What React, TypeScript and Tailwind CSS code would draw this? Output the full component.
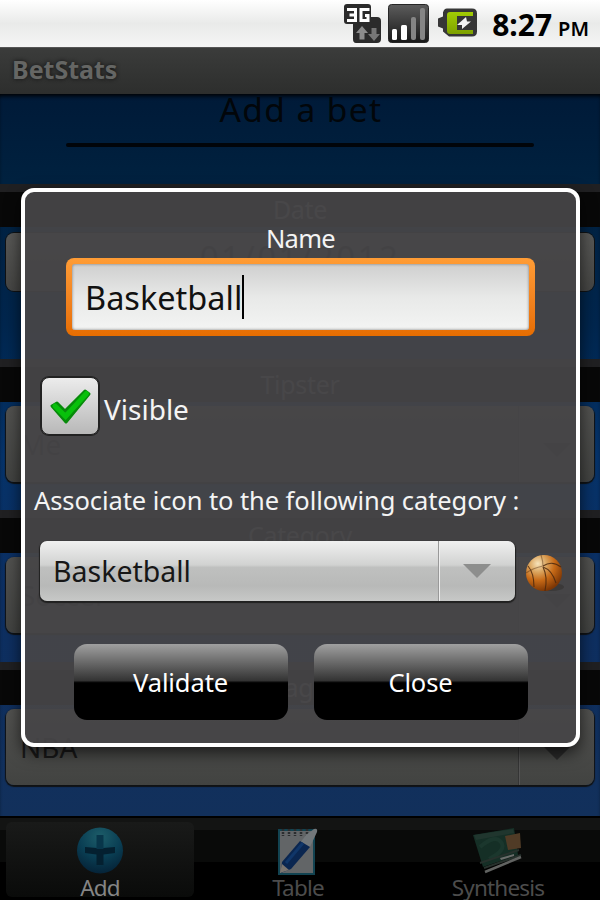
import type { ReactNode } from "react";
import clsx from "clsx";

function StatusIcons() {
  return (
    <svg width="136" height="47" viewBox="0 0 136 47" className="shrink-0">
      <defs>
        <linearGradient id="tile" x1="0" y1="0" x2="0" y2="1">
          <stop offset="0" stopColor="#5c5c5c" />
          <stop offset="1" stopColor="#181818" />
        </linearGradient>
        <linearGradient id="cell" x1="0" y1="0" x2="0" y2="1">
          <stop offset="0" stopColor="#a2cc04" />
          <stop offset="1" stopColor="#7da000" />
        </linearGradient>
      </defs>

      {/* 3G */}
      <path
        d="M4 4H25Q28 4 28 7V17H34Q38 17 38 21V39Q38 43 34 43H13Q10 43 10 39V24H4Q1 24 1 21V7Q1 4 4 4Z"
        fill="#2b2b2b"
      />
      <path d="M4 9.500H12.500V20.500H4M6.500 15H12.500" fill="none" stroke="#fff" strokeWidth="3" />
      <path d="M26.500 9.500H18V20.500H25V15.500H22" fill="none" stroke="#fff" strokeWidth="3" />
      <path d="M19 26L25 33H21.500V39.500H16.500V33H13Z" fill="#8c8c8c" />
      <path d="M31 41L25 34H28.500V28H33.500V34H37Z" fill="#777" />

      {/* signal */}
      <rect x="45.500" y="4.500" width="40" height="38" rx="3" fill="url(#tile)" stroke="#262626" />
      <rect x="49" y="29" width="5" height="11" rx="1.500" fill="#fff" />
      <rect x="58" y="25" width="6" height="15" rx="1.500" fill="#fff" />
      <rect x="68" y="17" width="5" height="23" rx="2" fill="#858585" />
      <rect x="77" y="8" width="5" height="32" rx="2" fill="#858585" />

      {/* battery */}
      <path
        d="M104 8H129Q134 8 134 13V31Q134 36 129 36H106L100 31V28L95 26V18L100 16V12Q101 8 104 8Z"
        transform="translate(0 .5)"
        fill="#363636"
      />
      <path d="M107 12H130V16H114V30H130V34H107Q104 34 104 31V15Q104 12 107 12Z" fill="url(#cell)" />
      <path d="M114 25L123 17L124 21.500H128L119 29L119 25Z" fill="#f4f4f4" />
    </svg>
  );
}

function Basketball() {
  return (
    <svg width="42" height="42" viewBox="0 0 42 42" className="shrink-0">
      <defs>
        <radialGradient id="ball" cx=".33" cy=".24" r=".78">
          <stop offset="0" stopColor="#f6e3bb" />
          <stop offset=".3" stopColor="#dba660" />
          <stop offset=".6" stopColor="#c76a17" />
          <stop offset="1" stopColor="#7d3604" />
        </radialGradient>
      </defs>
      <ellipse cx="28" cy="34" rx="13" ry="4" fill="#302d2b" opacity=".5" />
      <circle cx="21" cy="20" r="18" fill="url(#ball)" />
      <g fill="none" stroke="#4b280e" strokeWidth="1.100" opacity=".85">
        <path d="M5 13Q11 20 11 34" />
        <path d="M20 14Q25 24 22 38" />
        <path d="M20 13Q29 7 38 14" />
        <path d="M20 14Q29 17 33 30" />
        <path d="M3 20Q10 15 20 13Q20 8 18 2" opacity=".5" />
      </g>
    </svg>
  );
}

function AddIcon() {
  return (
    <svg width="48" height="50" viewBox="0 0 48 50">
      <defs>
        <radialGradient id="add" cx=".5" cy=".2" r=".8">
          <stop offset="0" stopColor="#1d5d69" />
          <stop offset=".55" stopColor="#0a3f54" />
          <stop offset="1" stopColor="#052338" />
        </radialGradient>
      </defs>
      <circle cx="24" cy="24.500" r="23" fill="url(#add)" />
      <path d="M20.500 22H27.500L39 21V27L27.500 28.500V39H20.500V28.500L9 27V21Z" fill="#042030" />
      <path d="M20.500 9H27.500V23H20.500Z" fill="#08364a" />
    </svg>
  );
}

function TableIcon() {
  return (
    <svg width="48" height="50" viewBox="0 0 48 50">
      <path d="M5 4H40V48H5Z" fill="#626567" stroke="#124351" strokeWidth="2" />
      <path d="M9 3V10M15 3V10M21 3V10M27 3V10M33 3V10" stroke="#2b2d2f" strokeWidth="2.500" strokeDasharray="2 1" />
      <path d="M32 9L40 3Q44 2 43 6L36 21L26 17Z" fill="#72777a" />
      <path d="M26 15L36 21L17 43L7 47L8 36Z" fill="#0a2650" />
      <path d="M29 17L12 37" stroke="#103669" strokeWidth="3" />
      <path d="M8 38L15 44L6 47Z" fill="#7b756f" />
    </svg>
  );
}

function SynthesisIcon() {
  return (
    <svg width="54" height="50" viewBox="0 0 54 50">
      <path d="M2 9L43 2L47 29L12 41Z" fill="#152f26" />
      <path d="M3 9L42 3L43 7L5 14Z" fill="#20362e" />
      <path d="M9 21Q24 8 30 16T18 33" fill="none" stroke="#1b372d" strokeWidth="4" />
      <path d="M34 10L49 7L50 22L37 24Z" fill="#503b26" />
      <path d="M9 37L48 24M13 42L50 29" stroke="#26312c" strokeWidth="2" />
      <path d="M14 46L50 31" stroke="#616361" strokeWidth="2.500" />
      <path d="M29 32L43 28V30L30 34Z" fill="#6b6d6b" />
    </svg>
  );
}

function SectionBar({ children }: { children: ReactNode }) {
  return (
    <div className="h-[43px] shrink-0 bg-[linear-gradient(#202022_0_8px,#080808_8px)] text-center">
      <span className="block pt-2 text-[25px] leading-[34px] tracking-[-0.3px] text-[#666]">{children}</span>
    </div>
  );
}

function DimSpinner({ children }: { children: ReactNode }) {
  return (
    <div className="mx-1.5 mt-1 flex h-[76px] shrink-0 rounded-lg bg-linear-to-b from-[#525250] to-[#424341] shadow-[0_1px_1px_1px_#101214]">
      <div className="flex flex-1 items-center pl-3.5 text-[28px] text-[#191919]">{children}</div>
      <div className="flex w-[76px] items-center justify-center border-l border-[#353535] shadow-[inset_1px_0_#555]">
        <svg width="28" height="14" viewBox="0 0 28 14" className="mt-3">
          <path d="M0 0H28L14 14Z" fill="#2b2b2b" />
        </svg>
      </div>
    </div>
  );
}

const tabs = [
  { label: "Add", icon: <AddIcon />, active: true },
  { label: "Table", icon: <TableIcon />, active: false },
  { label: "Synthesis", icon: <SynthesisIcon />, active: false },
];

function DialogButton({ children }: { children: ReactNode }) {
  return (
    <button
      type="button"
      className="h-[76px] w-[214px] rounded-[13px] bg-[linear-gradient(#a0a0a0_0,#343434_48%,#000_51%)] text-[25.500px] tracking-[-0.1px] text-white"
    >
      {children}
    </button>
  );
}

function EditDialog() {
  return (
    <div
      role="dialog"
      className="absolute top-[188px] left-[21px] flex h-[559px] w-[559px] flex-col rounded-[13px] border-4 border-white bg-[#464547]/94 text-[#f4f4f4] shadow-[0_6px_16px_rgba(0,0,0,0.65)]"
    >
      <label className="mt-7 block h-9 text-center text-[25.500px] leading-9 tracking-[-0.7px]">Name</label>
      <div className="mx-[41px] mt-0.5 h-[78px] shrink-0 rounded-lg bg-linear-to-b from-[#ff9c35] to-[#e66d00] p-1.5">
        <div className="flex h-full items-center rounded-[3px] bg-linear-to-b from-[#cfcfcf] via-[#e8e9e8] to-[#f3f4f3] pl-[13px] text-[#111] shadow-[inset_0_0_3px_#777]">
          <span className="pt-0.5 text-[32.500px] leading-10">Basketball</span>
          <span className="h-11 w-0.5 bg-black" />
        </div>
      </div>

      <div className="mt-[41px] ml-4 flex h-[58px] items-center gap-[5px]">
        <div className="flex size-[58px] items-center justify-center rounded-lg border border-[#222] bg-linear-to-b from-[#ececec] to-[#b8b8b8] shadow-[0_0_0_1px_#222]">
          <svg width="44" height="38" viewBox="0 0 44 38" className="mt-0.5">
            <path d="M4 18L9 15L17 23L37 3L41 6L18 34Z" fill="#08b90b" stroke="#078a0a" strokeWidth="3" strokeLinejoin="round" />
            <path d="M7 18L17.500 28.500L38.500 5.500" fill="none" stroke="#08c00b" strokeWidth="5" strokeLinecap="round" />
          </svg>
        </div>
        <span className="pt-1.5 text-[28px] leading-9">Visible</span>
      </div>

      <p className="mt-[47px] ml-[9px] h-9 text-[25.500px] leading-9 tracking-[-0.08px] whitespace-nowrap">
        Associate icon to the following category :
      </p>

      <div className="mt-[23px] ml-[15px] flex h-[60px] items-center">
        <div className="flex h-full w-[475px] rounded-[7px] bg-[linear-gradient(#f0f0f0_0,#d1d2d1_40%,#bfc0bf_44%,#b8b9b8_75%,#c7c8c7_100%)] shadow-[0_1px_1px_1px_#202020]">
          <div className="flex flex-1 items-center pl-[13px] text-[28.500px] text-[#171717]">Basketball</div>
          <div className="flex w-[77px] items-center justify-center border-l border-[#999] shadow-[inset_1px_0_#eee]">
            <svg width="28" height="14" viewBox="0 0 28 14">
              <path d="M0 0H28L14 14Z" fill="#8d8e8d" />
            </svg>
          </div>
        </div>
        <div className="mt-1.5 ml-2">
          <Basketball />
        </div>
      </div>

      <div className="mt-[43px] flex justify-center gap-[26px]">
        <DialogButton>Validate</DialogButton>
        <DialogButton>Close</DialogButton>
      </div>
    </div>
  );
}

export default function App() {
  return (
    <div className="relative flex h-[900px] w-[600px] flex-col overflow-hidden bg-black font-['Noto_Sans','Open_Sans',sans-serif]">
      <header className="flex h-[47px] shrink-0 items-center justify-end bg-linear-to-b from-white via-[#e9eae9] to-[#f5f5f5] pr-[11px] text-black">
        <StatusIcons />
        <div className="ml-[13px] flex items-baseline gap-1.5 pt-0.5">
          <span className="text-[30px] leading-10 font-bold">8:27</span>
          <span className="text-[20px] font-semibold">PM</span>
        </div>
      </header>

      <div className="h-[47px] shrink-0 bg-linear-to-b from-[#3b3c3b] to-[#2d2e2d] pl-3 text-[25px] leading-[45px] font-bold text-[#656664] shadow-[inset_0_1px_#555] [text-shadow:0_0_4px_#111]">
        BetStats
      </div>

      <main className="flex min-h-0 flex-1 flex-col bg-[linear-gradient(#001a38_0,#00213f_12%,#00264e_32%,#06336a_50%,#0d2f62_70%,#12305b_100%)] shadow-[inset_0_4px_4px_-2px_#000]">
        <div className="h-[90px] shrink-0 overflow-hidden px-[66px]">
          <h1 className="-mt-1.5 pl-0.5 text-center text-[33.500px] leading-[42px] tracking-[1.4px] text-[#02060a]">
            Add a bet
          </h1>
          <div className="mt-[13px] h-1 rounded-sm bg-[#01050a]" />
        </div>

        <SectionBar>Date</SectionBar>
        <div className="h-[132px] shrink-0 px-1.5 pt-1.5">
          <div className="h-[58px] rounded-lg bg-linear-to-b from-[#585856] to-[#464644] text-center text-[33px] leading-[50px] tracking-[2.5px] text-[#1c1c1c] shadow-[0_0_0_1px_#101214]">
            01/01/2012
          </div>
        </div>
        <SectionBar>Tipster</SectionBar>
        <div className="flex h-[108px] shrink-0 flex-col">
          <DimSpinner>Me</DimSpinner>
        </div>
        <SectionBar>Category</SectionBar>
        <div className="flex h-[109px] shrink-0 flex-col">
          <DimSpinner>Soccer</DimSpinner>
        </div>
        <SectionBar>League</SectionBar>
        <DimSpinner>NBA</DimSpinner>
      </main>

      <nav className="flex h-[84px] shrink-0 bg-[linear-gradient(#000_0_2px,#131413_2px_14px,#090a09_14px_46px,#000_46px)]">
        {tabs.map((tab) => (
          <div key={tab.label} className="flex flex-1 px-1.5 pt-1.5 pb-[3px]">
            <div
              className={clsx(
                "flex flex-1 flex-col items-center rounded-md",
                tab.active ? "bg-linear-to-b from-[#191a19] to-[#0a0b0a] text-[#858585]" : "pr-1 text-[#4c4c4c]"
              )}
            >
              <div className="mt-1 h-[50px]">{tab.icon}</div>
              <span className="text-[22.500px] leading-6 tracking-[-0.8px]">{tab.label}</span>
            </div>
          </div>
        ))}
      </nav>

      <EditDialog />
    </div>
  );
}
